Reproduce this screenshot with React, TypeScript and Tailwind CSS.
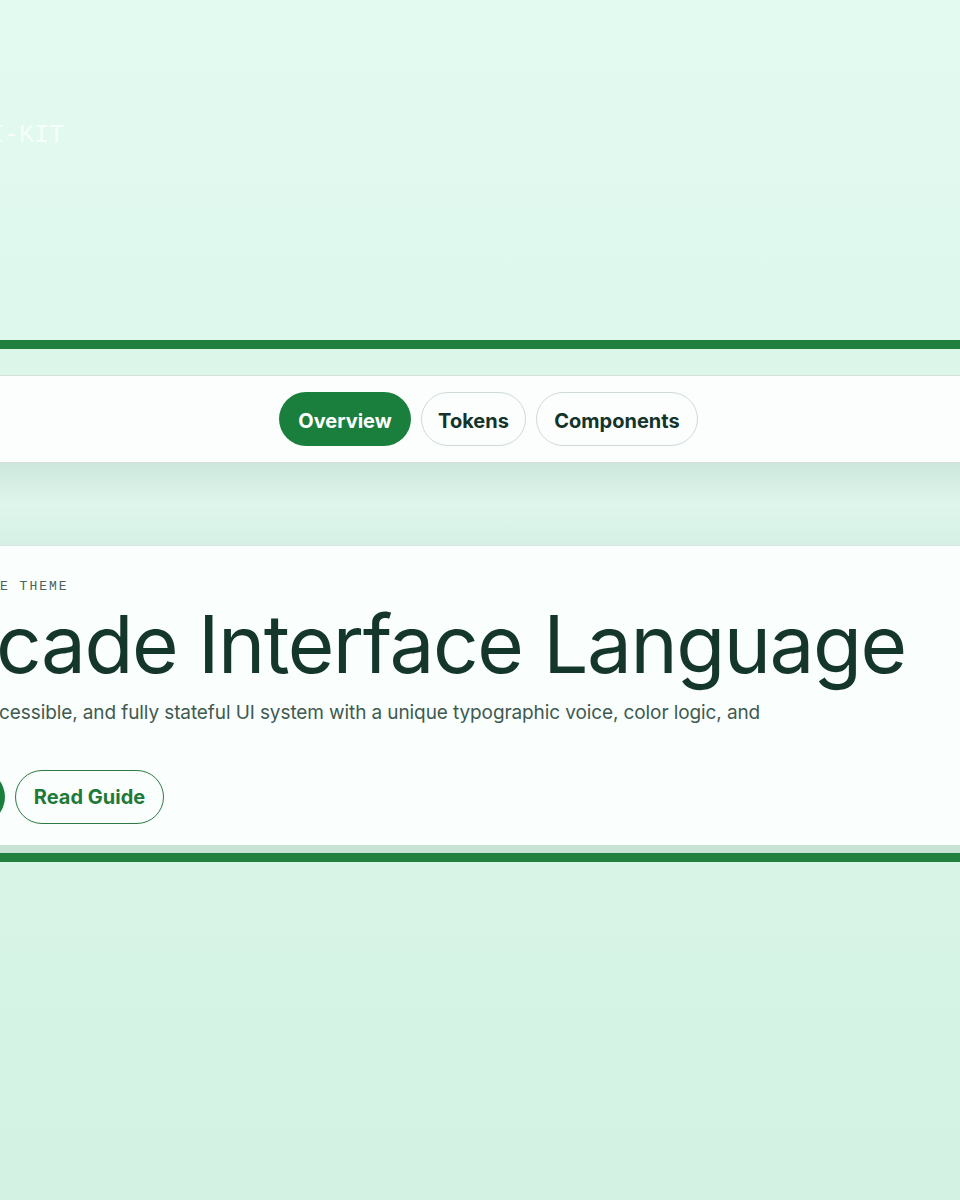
import React from "react";

const sans = { fontFamily: "Inter, 'Noto Sans', sans-serif" };
const mono = { fontFamily: "'Liberation Mono', 'DejaVu Sans Mono', monospace" };

function NavPill({ label, active, width }: { label: string; active?: boolean; width: string }) {
  return (
    <button
      className={
        active
          ? `${width} h-[54px] pt-[3px] rounded-full bg-[#1a7f3d] text-white text-[20px] font-bold flex items-center justify-center`
          : `${width} h-[54px] pt-[3px] rounded-full border border-[#cfdad5] bg-[#fbfefd] text-[#14332a] text-[20px] font-bold flex items-center justify-center`
      }
    >
      {label}
    </button>
  );
}

export default function App() {
  return (
    <div
      className="w-[960px] min-h-[1200px] overflow-hidden bg-gradient-to-b from-[#e3faf0] to-[#d3f2e3] flex flex-col"
      style={sans}
    >
      {/* Brand strip */}
      <div className="h-[340px] pt-[123px]">
        <div className="-ml-[26px] text-[25px] text-[#f6fffa] leading-none" style={mono}>
          UI-KIT
        </div>
      </div>

      <div className="h-[9px] bg-[#21803f]" />
      <div className="h-[26px] bg-[#dcf6ea]" />

      {/* Navigation */}
      <nav className="h-[88px] border-y border-[#d3dfda] bg-[#fbfefd] flex items-center pl-[279px]">
        <div className="flex items-center gap-[10px]">
          <NavPill label="Overview" active width="w-[132px]" />
          <NavPill label="Tokens" width="w-[105px]" />
          <NavPill label="Components" width="w-[162px]" />
        </div>
      </nav>

      <div className="h-[82px] bg-gradient-to-b from-[#cee7dc] via-[#def6eb] to-[#d7f0e5]" />

      {/* Hero */}
      <section className="h-[300px] border-t border-[#d8e4df] bg-[#fafefc] flex flex-col -ml-[90px]">
        <div className="pt-[34px] pl-[41px] text-[13px] tracking-[2px] text-[#4b6259] leading-none" style={mono}>
          ARCADE THEME
        </div>
        <h1 className="mt-[3px] pl-[5px] text-[80px] leading-[96px] tracking-[-1.5px] font-normal text-[#15362a] whitespace-nowrap">
          Arcade Interface Language
        </h1>
        <p className="mt-[7px] text-[19px] leading-[28px] tracking-[-0.1px] text-[#3f5a50] whitespace-nowrap">
          A bold, accessible, and fully stateful UI system with a unique typographic voice, color logic, and
        </p>
        <div className="mt-[43px] flex items-center gap-[10px]">
          <button className="h-[54px] w-[95px] rounded-full bg-[#1a7f3d] text-white text-[20px] font-bold">
            Start
          </button>
          <button className="h-[54px] w-[149px] rounded-full border border-[#2d7a47] text-[#1f7a3a] text-[20px] font-bold">
            Read Guide
          </button>
        </div>
      </section>

      <div className="h-[8px] bg-[#c8e3d6]" />
      <div className="h-[9px] bg-[#21803f]" />
      <div className="flex-1" />
    </div>
  );
}
